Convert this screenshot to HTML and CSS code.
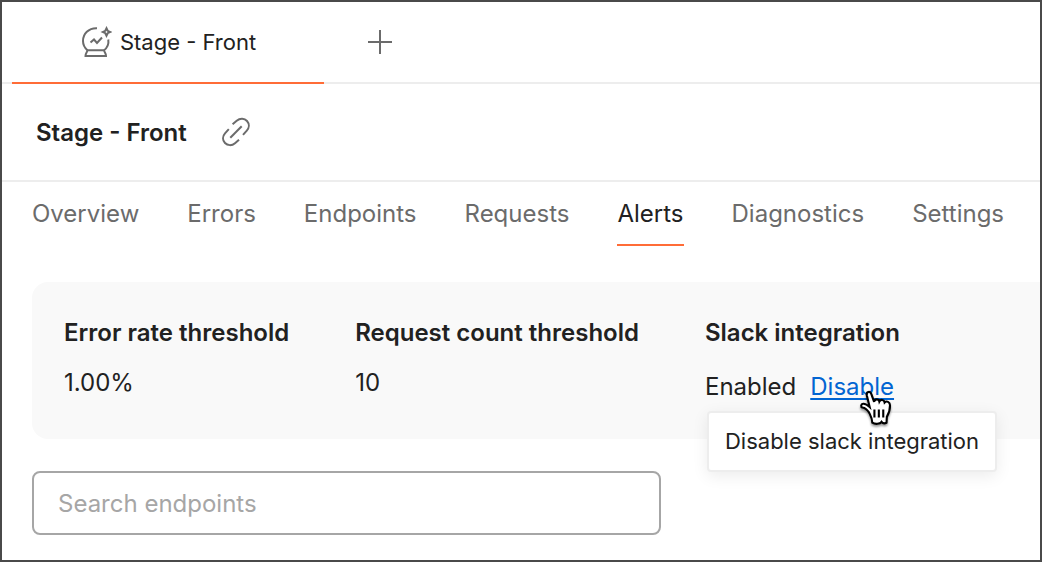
FILE: index.html
```html
<!DOCTYPE html>
<html lang="en">

<head>
    <meta charset="utf-8">
    <title>Stage - Front</title>
    <meta name="viewport" content="width=device-width, initial-scale=1">
    <link rel="stylesheet" href="styles.css">
</head>

<body>
    <div class="window">
        <!-- open tabs -->
        <div class="tabbar">
            <a class="tab" href="#">
                <svg class="tab-icon" viewBox="0 1 32 32" width="32" height="32">
                    <path d="M17 3.200 C8.500 2.800 3 9 3 16 C3 20 4.800 23 7.500 25.200 M28.300 14.500 C28.900 19 27 23 24 25.200" />
                    <path d="M7.500 25.200 H24 C24.300 27.500 26 28 26 31 H5.500 C5.500 28 7.200 27.500 7.500 25.200 Z" />
                    <path d="M10.500 17.500 L14 14.500 L17 18 L22 12.500" />
                    <path d="M26.500 3.300 L27.700 5.800 L30.200 7 L27.700 8.200 L26.500 10.700 L25.300 8.200 L22.800 7 L25.300 5.800 Z" />
                </svg>
                Stage - Front
            </a>
            <button class="new-tab" type="button" aria-label="New tab">
                <svg viewBox="0 0 24 24" width="24" height="24">
                    <path d="M12 0 V24 M0 12 H24" />
                </svg>
            </button>
        </div>

        <div class="title-row">
            <h1>Stage - Front</h1>
            <button class="copy-link" type="button" aria-label="Copy link">
                <svg viewBox="0 0 32 32" width="32" height="32">
                    <path d="M12.600 8.200 L16.700 4.700 C20 2 24.500 2.200 27 5 C29.600 7.900 29.300 11.800 26.800 14.600 L23 18.800" />
                    <path d="M8.800 13.200 L5 17.400 C2.500 20.200 2.300 24.200 5 27 C7.600 29.800 12 29.800 15 27.200 L19 23.700" />
                    <path d="M10.300 21.700 L21.700 10.300" />
                </svg>
            </button>
        </div>

        <nav class="nav">
            <a href="#">Overview</a>
            <a href="#">Errors</a>
            <a href="#">Endpoints</a>
            <a href="#">Requests</a>
            <a class="active" href="#">Alerts</a>
            <a href="#">Diagnostics</a>
            <a href="#">Settings</a>
        </nav>

        <div class="content">
            <div class="panel">
                <div class="setting">
                    <h2>Error rate threshold</h2>
                    <p>1.00%</p>
                </div>
                <div class="setting">
                    <h2>Request count threshold</h2>
                    <p>10</p>
                </div>
                <div class="setting">
                    <h2>Slack integration</h2>
                    <div class="slack-state">
                        <span>Enabled</span>
                        <a class="disable" href="#" aria-describedby="slack-tip">Disable</a>
                        <div class="tooltip" id="slack-tip" role="tooltip">Disable slack integration</div>
                        <!-- hand pointer -->
                        <svg class="pointer" viewBox="0 0 34 38" width="36" height="40">
                            <path d="M10.500 22.500 C8.500 19.500 6.500 18 4.200 17.600 C2.300 17.100 2.500 14.200 4.800 14 C7 13.800 9 15.300 11 17.200 L8.300 6.200 C7.500 2.300 11.500 1.500 12.600 4.800 L15.200 12.200 C15.600 9.200 19.600 9 20.200 12 C21.500 9.500 24.700 9.900 25.200 12.800 C27 11 30.300 12.200 30.300 15.500 C30.500 20.500 29.300 23 27.300 26.500 L27 32 C25 33 23.500 32.800 22.300 31.200 C20.800 33.500 16 33.600 13.500 32 C13.500 28 12 25.500 10.500 22.500 Z" />
                            <path d="M15.500 19.500 V27 M19.700 19.500 V27 M23.900 19.500 V27" />
                        </svg>
                    </div>
                </div>
            </div>

            <input class="search" type="text" placeholder="Search endpoints" aria-label="Search endpoints">
        </div>
    </div>
</body>

</html>
```
FILE: styles.css
```css
* {
    box-sizing: border-box;
}

body {
    margin: 0;
    font-family: Inter, "Liberation Sans", sans-serif;
    font-size: 24px;
    color: #212121;
    background-color: #fff;
}

h1,
h2,
p {
    margin: 0;
}

h1,
h2 {
    font-size: 24px;
    font-weight: 600;
}

a {
    color: inherit;
    text-decoration: none;
}

button {
    display: flex;
    padding: 0;
    border: none;
    background: none;
    cursor: pointer;
}

svg {
    fill: none;
    stroke: #6b6b6b;
    stroke-width: 2;
}

.window {
    min-height: 100vh;
    border: 2px solid #4a4a4a;
    overflow: hidden;
}

.tabbar {
    display: flex;
    align-items: stretch;
    gap: 44px;
    height: 82px;
    padding-left: 10px;
    box-shadow: inset 0 -2px #ededed;
}

.tab {
    display: flex;
    align-items: center;
    justify-content: center;
    gap: 8px;
    width: 312px;
    font-size: 22px;
    border-bottom: 2px solid #ff6c37;
}

.new-tab {
    align-items: center;
    padding-bottom: 2px;
}

.title-row {
    display: flex;
    align-items: center;
    gap: 33px;
    height: 98px;
    padding-left: 34px;
    border-bottom: 2px solid #ededed;
}

.nav {
    display: flex;
    gap: 48px;
    padding-left: 30px;
    color: #6b6b6b;
}

.nav a {
    padding: 8px 0 6px;
    line-height: 48px;
    border-bottom: 2px solid transparent;
}

.nav .active {
    color: #212121;
    border-color: #ff6c37;
}

.content {
    padding: 36px 0 24px 30px;
}

.panel {
    display: flex;
    gap: 66px;
    padding: 32px;
    white-space: nowrap;
    background-color: #f9f9f9;
    border-radius: 16px 0 0 16px;
}

.setting h2 {
    margin-bottom: 14px;
    line-height: 38px;
}

.setting p {
    line-height: 34px;
}

.slack-state {
    position: relative;
    display: flex;
    gap: 14px;
    line-height: 41px;
}

.disable {
    color: #0265d2;
    text-decoration: underline;
    text-decoration-thickness: 2px;
    text-underline-offset: 3px;
}

.tooltip {
    position: absolute;
    top: 45px;
    left: 2px;
    padding: 8px 16px;
    font-size: 22px;
    background-color: #fff;
    border: 2px solid #ededed;
    border-radius: 4px;
    box-shadow: 0 4px 16px rgba(0, 0, 0, .08);
}

.pointer {
    position: absolute;
    top: 23px;
    left: 153px;
    fill: #fff;
    stroke: #000;
    filter: drop-shadow(0 2px 1px rgba(0, 0, 0, .4));
}

.search {
    display: block;
    width: 100%;
    max-width: 629px;
    height: 64px;
    margin-top: 32px;
    padding: 0 24px;
    font: inherit;
    color: #212121;
    background-color: #fff;
    border: 2px solid #a6a6a6;
    border-radius: 8px;
}

.search::placeholder {
    color: #a6a6a6;
}
```
